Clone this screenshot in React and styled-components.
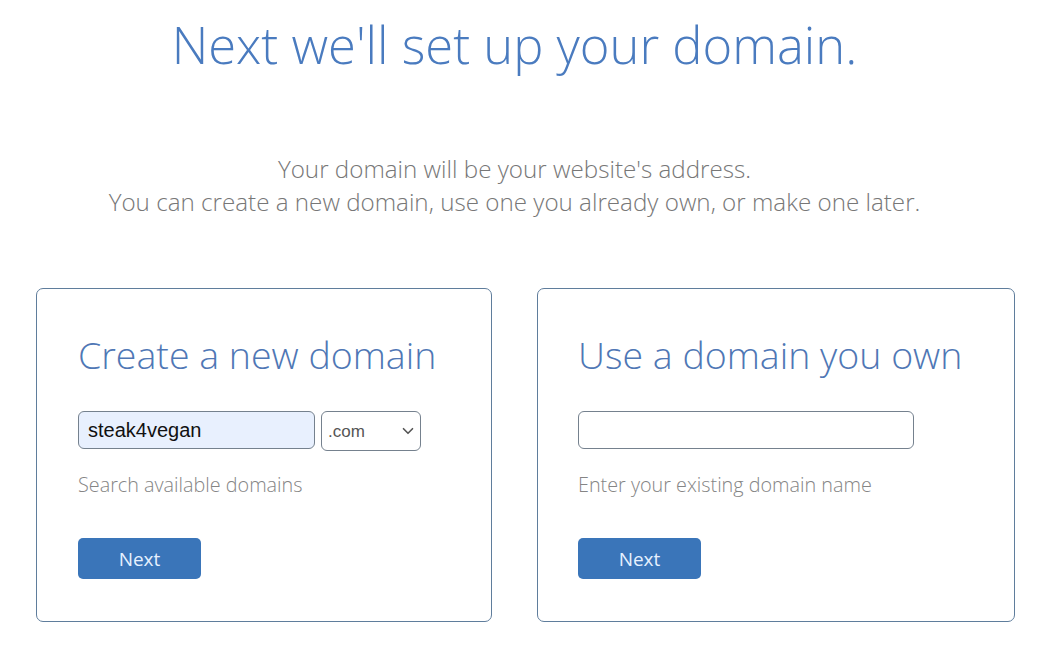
import React from "react";
import styled, { createGlobalStyle } from "styled-components";
import { ChevronDown } from "lucide-react";

const GlobalStyle = createGlobalStyle`
  body {
    margin: 0;
    background: #fff;
    font-family: "Open Sans", "Liberation Sans", sans-serif;
  }
`;

const Page = styled.div`
  width: 1044px;
  padding-top: 15px;
`;

const Header = styled.header`
  width: 1029px;
  text-align: center;
`;

const Title = styled.h1`
  margin: 0;
  font-size: 50.7px;
  line-height: 60px;
  font-weight: 300;
  color: #4a7bbf;
`;

const Intro = styled.p`
  margin: 77px 0 0;
  font-size: 24.2px;
  line-height: 33px;
  font-weight: 300;
  color: #777;
`;

const Cards = styled.div`
  display: grid;
  grid-template-columns: 456px 478px;
  gap: 45px;
  margin-top: 70px;
  padding-left: 36px;
`;

const Card = styled.section`
  border: 1px solid #5f7d9c;
  border-radius: 7px;
  padding: 44px 40px 42px ${(p) => p.$inset}px;
`;

const CardTitle = styled.h2`
  margin: 0;
  font-size: 37.5px;
  line-height: 44px;
  font-weight: 300;
  color: #4f77b5;
  white-space: nowrap;
`;

const FieldRow = styled.div`
  display: flex;
  align-items: flex-start;
  gap: 6px;
  margin-top: 34px;
  height: 40px;
`;

const TextInput = styled.input`
  box-sizing: border-box;
  width: ${(p) => p.$width}px;
  height: 38px;
  padding: 0 9px;
  border: 1px solid #75818e;
  border-radius: 6px;
  background: ${(p) => (p.$filled ? "#e8f0fe" : "#fff")};
  font-family: "Liberation Sans", Arial, sans-serif;
  font-size: 20px;
  color: #111;
  outline: none;
`;

const SelectWrap = styled.div`
  position: relative;
  width: 100px;
  height: 40px;
`;

const Select = styled.select`
  box-sizing: border-box;
  width: 100%;
  height: 100%;
  padding: 0 0 0 6px;
  border: 1px solid #75818e;
  border-radius: 6px;
  background: #fff;
  appearance: none;
  font-family: "Liberation Sans", Arial, sans-serif;
  font-size: 17px;
  color: #555;
  outline: none;
`;

const Chevron = styled(ChevronDown)`
  position: absolute;
  right: 4px;
  top: 11px;
  pointer-events: none;
  color: #555;
`;

const Hint = styled.p`
  margin: 21px 0 0;
  font-size: 19.8px;
  line-height: 26px;
  font-weight: 300;
  color: #858585;
`;

const NextButton = styled.button`
  display: block;
  margin-top: 40px;
  width: 123px;
  height: 41px;
  border: none;
  border-radius: 5px;
  background: #3a75b9;
  color: #e6f1ff;
  font-family: "Open Sans", sans-serif;
  font-size: 19px;
  font-weight: 400;
`;

export default function App() {
  return (
    <Page>
      <GlobalStyle />
      <Header>
        <Title>Next we'll set up your domain.</Title>
        <Intro>
          Your domain will be your website's address.
          <br />
          You can create a new domain, use one you already own, or make one later.
        </Intro>
      </Header>
      <Cards>
        <Card $inset={41}>
          <CardTitle>Create a new domain</CardTitle>
          <FieldRow>
            <TextInput $width={237} $filled defaultValue="steak4vegan" />
            <SelectWrap>
              <Select defaultValue=".com">
                <option>.com</option>
                <option>.net</option>
                <option>.org</option>
              </Select>
              <Chevron size={18} strokeWidth={2.2} />
            </SelectWrap>
          </FieldRow>
          <Hint>Search available domains</Hint>
          <NextButton>Next</NextButton>
        </Card>
        <Card $inset={40}>
          <CardTitle>Use a domain you own</CardTitle>
          <FieldRow>
            <TextInput $width={336} />
          </FieldRow>
          <Hint>Enter your existing domain name</Hint>
          <NextButton>Next</NextButton>
        </Card>
      </Cards>
    </Page>
  );
}
